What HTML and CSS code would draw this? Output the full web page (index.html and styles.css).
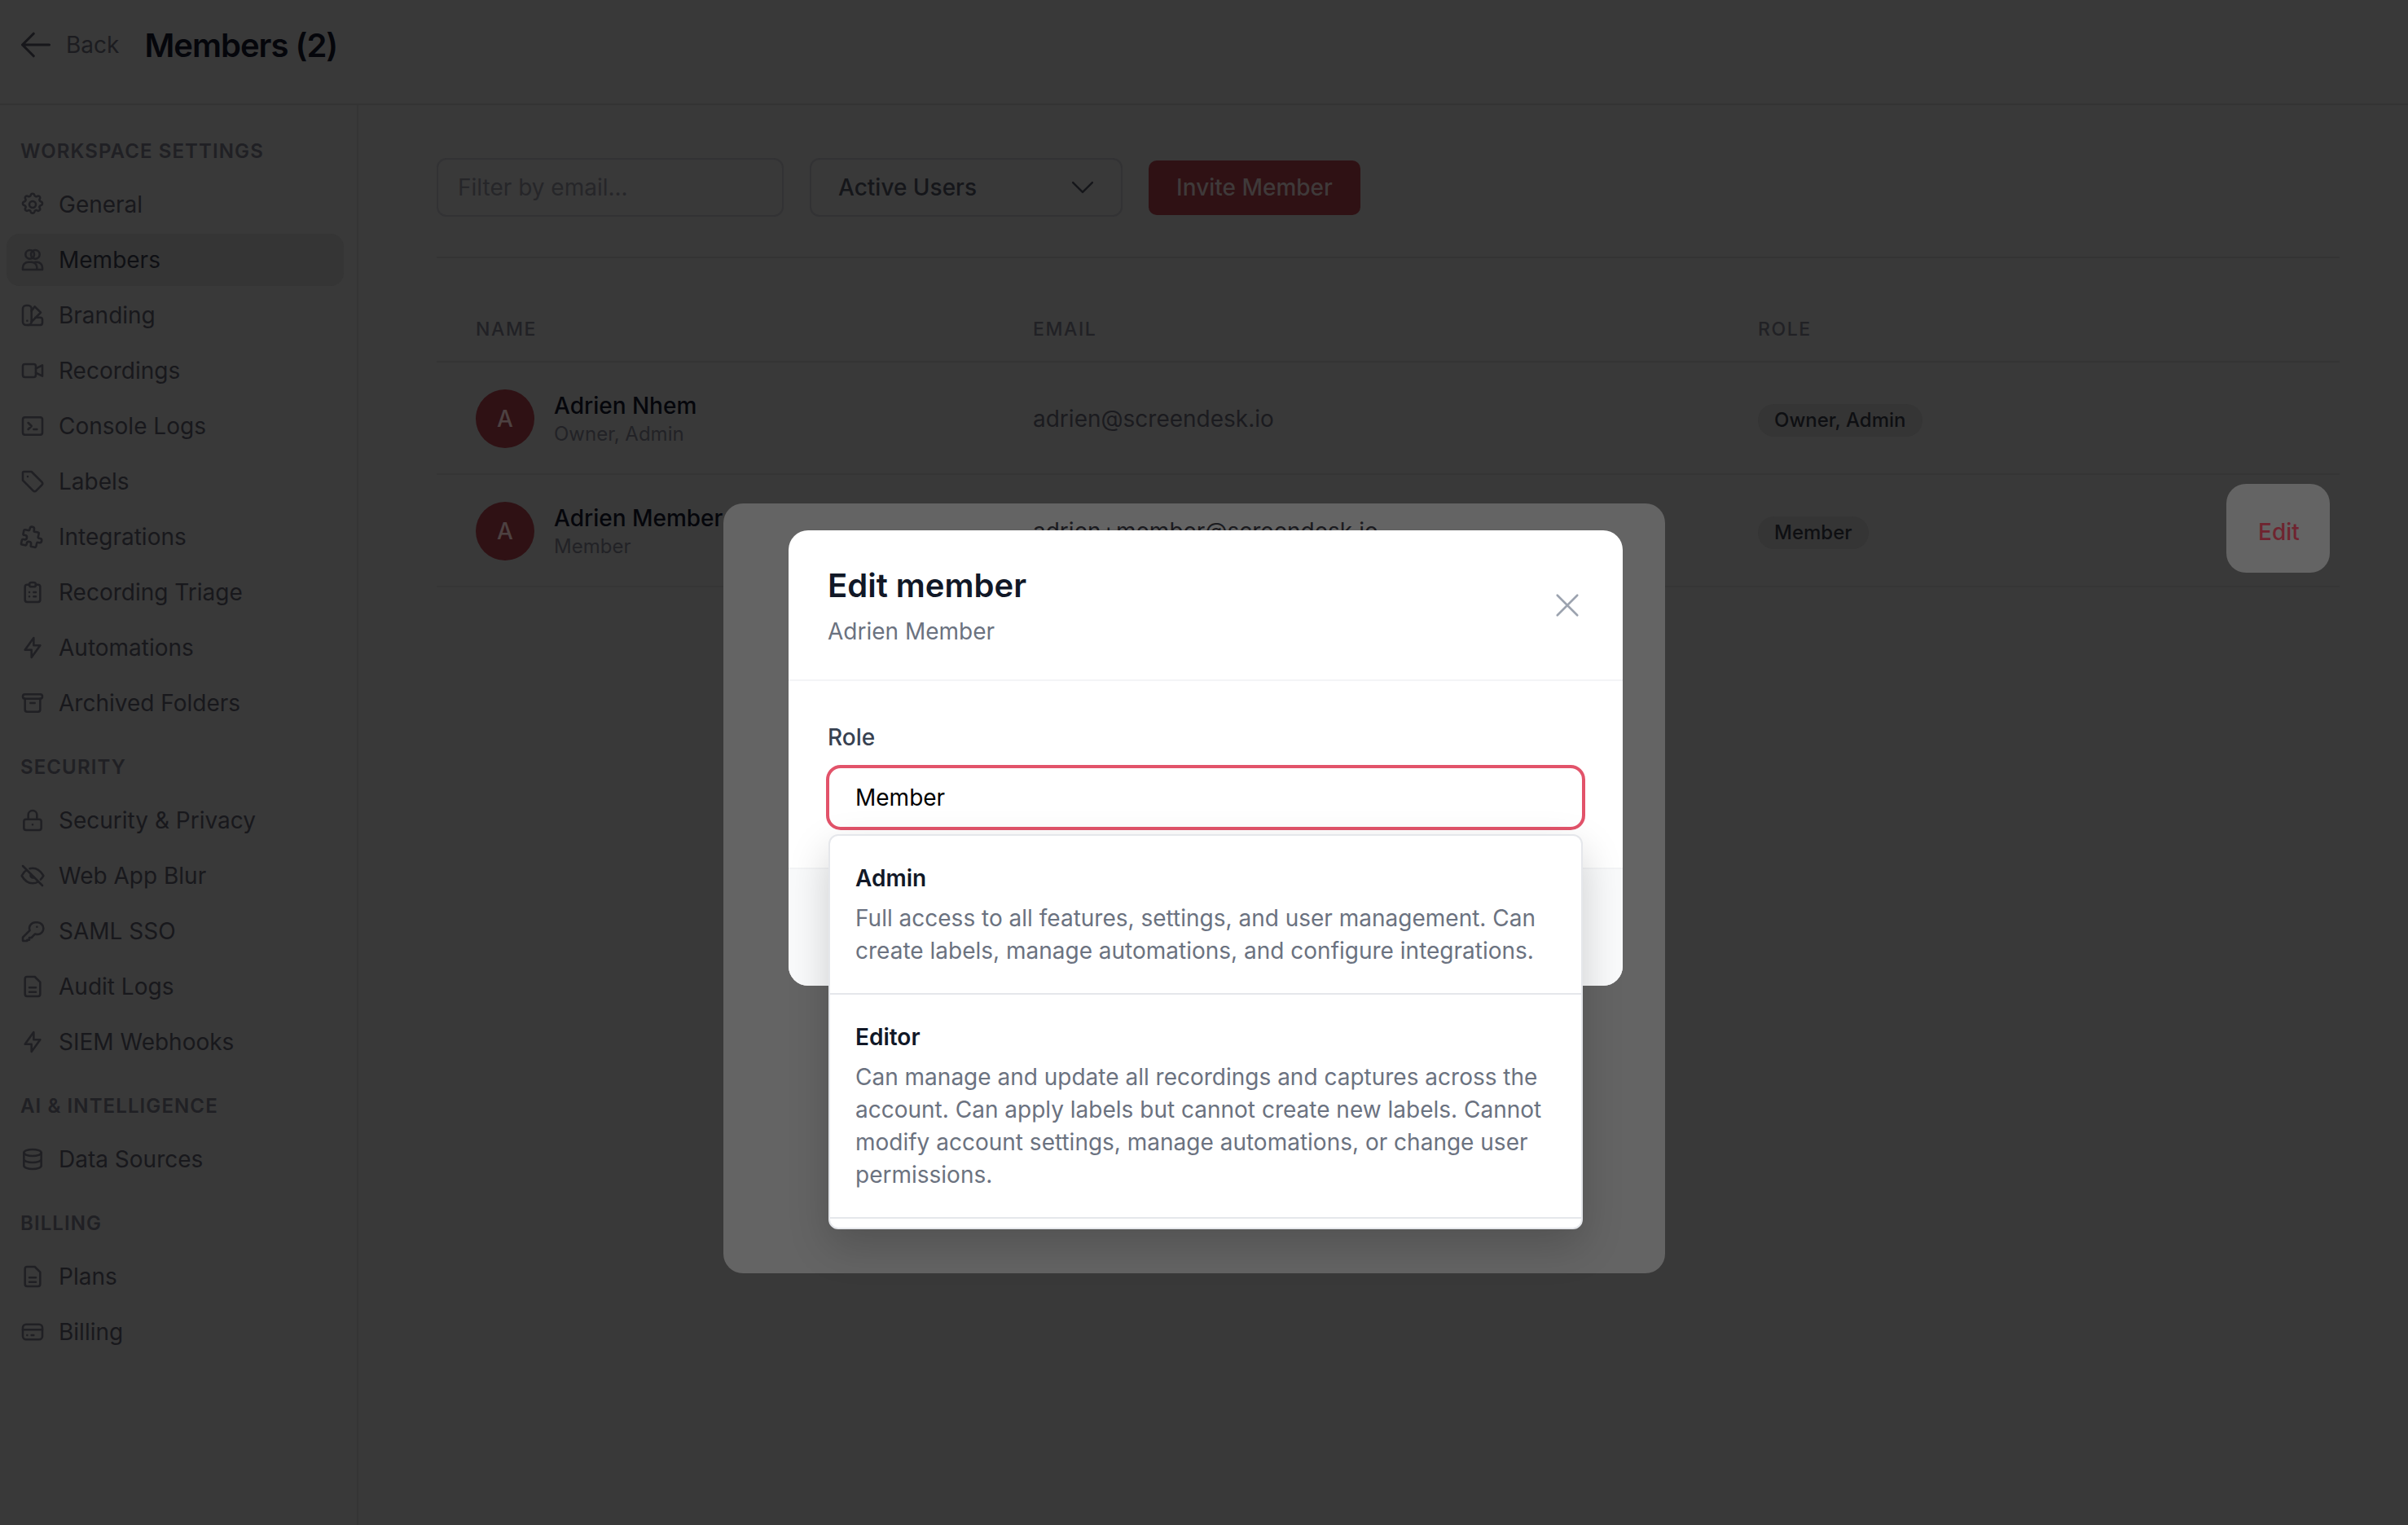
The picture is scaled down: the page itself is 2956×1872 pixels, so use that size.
FILE: index.html
```html
<!DOCTYPE html>
<html lang="en">
<head>
<meta charset="utf-8">
<title>Members</title>
<link rel="stylesheet" href="styles.css">
</head>
<body>
<svg class="defs" width="0" height="0" aria-hidden="true">
  <defs>
    <symbol id="i-gear" viewBox="0 0 24 24"><path d="M10.3 3.3c.4-1.7 3-1.700 3.400 0a1.700 1.700 0 0 0 2.600 1.100c1.500-.9 3.200.8 2.300 2.300a1.700 1.700 0 0 0 1.100 2.600c1.700.4 1.700 3 0 3.400a1.700 1.700 0 0 0-1.100 2.600c.9 1.500-.8 3.200-2.300 2.300a1.700 1.700 0 0 0-2.600 1.100c-.4 1.700-3 1.700-3.400 0a1.700 1.700 0 0 0-2.600-1.100c-1.500.9-3.200-.8-2.300-2.300a1.700 1.700 0 0 0-1.100-2.600c-1.700-.4-1.700-3 0-3.400a1.700 1.700 0 0 0 1.100-2.600c-.9-1.500.8-3.200 2.300-2.300a1.700 1.700 0 0 0 2.600-1.100z"/><circle cx="12" cy="12" r="3"/></symbol>
    <symbol id="i-users" viewBox="0 0 24 24"><circle cx="9.500" cy="7" r="4"/><circle cx="14.500" cy="7" r="4"/><path d="M3 21v-2a5 5 0 0 1 5-5h3a5 5 0 0 1 5 5v2zM14.500 14H16a5 5 0 0 1 5 5v2h-5"/></symbol>
    <symbol id="i-brand" viewBox="0 0 24 24"><rect x="3" y="3" width="8" height="18" rx="3"/><path d="M11 8l3-4 5.500 5.500-8.500 8.500M14.500 14H19a2 2 0 0 1 2 2v3a2 2 0 0 1-2 2H8"/><path d="M7 17h.01"/></symbol>
    <symbol id="i-video" viewBox="0 0 24 24"><rect x="3" y="6" width="12" height="12" rx="2"/><path d="M15 10l6-3v10l-6-3"/></symbol>
    <symbol id="i-term" viewBox="0 0 24 24"><rect x="3" y="4" width="18" height="16" rx="2"/><path d="M8 9l3 3-3 3M13 15h3"/></symbol>
    <symbol id="i-tag" viewBox="0 0 24 24"><path d="M4 3h7l9.500 9.500a2 2 0 0 1 0 2.800l-5.200 5.200a2 2 0 0 1-2.800 0L3 11V4a1 1 0 0 1 1-1z"/><path d="M7.500 7.500h.01"/></symbol>
    <symbol id="i-puzzle" viewBox="0 0 24 24"><path d="M4 7h3a1 1 0 0 0 1-1V5a2 2 0 0 1 4 0v1a1 1 0 0 0 1 1h3a1 1 0 0 1 1 1v3a1 1 0 0 0 1 1h1a2 2 0 0 1 0 4h-1a1 1 0 0 0-1 1v3a1 1 0 0 1-1 1h-3a1 1 0 0 1-1-1v-1a2 2 0 0 0-4 0v1a1 1 0 0 1-1 1H4a1 1 0 0 1-1-1v-3a1 1 0 0 1 1-1h1a2 2 0 0 0 0-4H4a1 1 0 0 1-1-1V8a1 1 0 0 1 1-1" transform="rotate(12 12 12)"/></symbol>
    <symbol id="i-clip" viewBox="0 0 24 24"><path d="M9 5H7a2 2 0 0 0-2 2v12a2 2 0 0 0 2 2h10a2 2 0 0 0 2-2V7a2 2 0 0 0-2-2h-2"/><rect x="9" y="3" width="6" height="4" rx="2"/><path d="M9 12h.01M13 12h2M9 16h.01M13 16h2"/></symbol>
    <symbol id="i-bolt" viewBox="0 0 24 24"><path d="M13 3v7h6l-8 11v-7H5z"/></symbol>
    <symbol id="i-archive" viewBox="0 0 24 24"><rect x="3" y="4" width="18" height="4" rx="2"/><path d="M5 8v10a2 2 0 0 0 2 2h10a2 2 0 0 0 2-2V8M10 12h4"/></symbol>
    <symbol id="i-lock" viewBox="0 0 24 24"><rect x="4" y="11" width="16" height="10" rx="2"/><path d="M8 11V7a4 4 0 0 1 8 0v4M12 16h.01"/></symbol>
    <symbol id="i-eyeoff" viewBox="0 0 24 24"><path d="M3 3l18 18M10.600 10.600a2 2 0 0 0 2.800 2.800M9.400 5.400A9 9 0 0 1 12 5c4 0 7.300 2.300 10 7-.8 1.400-1.700 2.600-2.600 3.500M6.600 6.600C4.900 7.700 3.400 9.500 2 12c2.700 4.700 6 7 10 7 1.900 0 3.600-.5 5.200-1.600"/></symbol>
    <symbol id="i-key" viewBox="0 0 24 24"><path d="M16.500 4a5.500 5.500 0 0 1 0 11c-.8 0-1.500-.1-2.200-.4L11 18H9v2H7v1H3.500a.5.500 0 0 1-.5-.5v-2.800l6.400-6.400c-.3-.7-.4-1.500-.4-2.300A5.500 5.500 0 0 1 14.500 4z"/><path d="M16 8h.01"/></symbol>
    <symbol id="i-file" viewBox="0 0 24 24"><path d="M14 3H7a2 2 0 0 0-2 2v14a2 2 0 0 0 2 2h10a2 2 0 0 0 2-2V8z"/><path d="M9 13h6M9 17h6"/></symbol>
    <symbol id="i-db" viewBox="0 0 24 24"><ellipse cx="12" cy="6" rx="8" ry="3"/><path d="M4 6v12c0 1.700 3.600 3 8 3s8-1.300 8-3V6M4 12c0 1.700 3.600 3 8 3s8-1.300 8-3"/></symbol>
    <symbol id="i-card" viewBox="0 0 24 24"><rect x="3" y="5" width="18" height="14" rx="3"/><path d="M3 10h18M7 15h.01M11 15h2"/></symbol>
  </defs>
</svg>

<header class="topbar">
  <a class="back">
    <svg class="back-arrow" viewBox="0 0 24 24"><path d="M10.500 19.500L3 12m0 0l7.500-7.500M3 12h18"/></svg>
    <span>Back</span>
  </a>
  <h1 class="page-title">Members (2)</h1>
</header>

<div class="shell">
  <nav class="sidebar">
    <div class="nav-label first">Workspace Settings</div>
    <a class="nav-item"><svg class="nav-icon"><use href="#i-gear"/></svg>General</a>
    <a class="nav-item active"><svg class="nav-icon"><use href="#i-users"/></svg>Members</a>
    <a class="nav-item"><svg class="nav-icon"><use href="#i-brand"/></svg>Branding</a>
    <a class="nav-item"><svg class="nav-icon"><use href="#i-video"/></svg>Recordings</a>
    <a class="nav-item"><svg class="nav-icon"><use href="#i-term"/></svg>Console Logs</a>
    <a class="nav-item"><svg class="nav-icon"><use href="#i-tag"/></svg>Labels</a>
    <a class="nav-item"><svg class="nav-icon"><use href="#i-puzzle"/></svg>Integrations</a>
    <a class="nav-item"><svg class="nav-icon"><use href="#i-clip"/></svg>Recording Triage</a>
    <a class="nav-item"><svg class="nav-icon"><use href="#i-bolt"/></svg>Automations</a>
    <a class="nav-item"><svg class="nav-icon"><use href="#i-archive"/></svg>Archived Folders</a>
    <div class="nav-label">Security</div>
    <a class="nav-item"><svg class="nav-icon"><use href="#i-lock"/></svg>Security &amp; Privacy</a>
    <a class="nav-item"><svg class="nav-icon"><use href="#i-eyeoff"/></svg>Web App Blur</a>
    <a class="nav-item"><svg class="nav-icon"><use href="#i-key"/></svg>SAML SSO</a>
    <a class="nav-item"><svg class="nav-icon"><use href="#i-file"/></svg>Audit Logs</a>
    <a class="nav-item"><svg class="nav-icon"><use href="#i-bolt"/></svg>SIEM Webhooks</a>
    <div class="nav-label">AI &amp; Intelligence</div>
    <a class="nav-item"><svg class="nav-icon"><use href="#i-db"/></svg>Data Sources</a>
    <div class="nav-label">Billing</div>
    <a class="nav-item"><svg class="nav-icon"><use href="#i-file"/></svg>Plans</a>
    <a class="nav-item"><svg class="nav-icon"><use href="#i-card"/></svg>Billing</a>
  </nav>

  <main class="content">
    <div class="toolbar">
      <div class="field filter">Filter by email...</div>
      <div class="field select">
        <span>Active Users</span>
        <svg class="chev" viewBox="0 0 24 24"><path d="M19.500 8.250l-7.500 7.500-7.500-7.500"/></svg>
      </div>
      <button class="invite">Invite Member</button>
    </div>

    <div class="table">
      <div class="row head">
        <div>Name</div>
        <div>Email</div>
        <div>Role</div>
      </div>
      <div class="row">
        <div class="person">
          <span class="avatar">A</span>
          <div class="pinfo"><div class="pname">Adrien Nhem</div><div class="psub">Owner, Admin</div></div>
        </div>
        <div class="email">adrien@screendesk.io</div>
        <div><span class="pill">Owner, Admin</span></div>
      </div>
      <div class="row">
        <div class="person">
          <span class="avatar">A</span>
          <div class="pinfo"><div class="pname">Adrien Member</div><div class="psub">Member</div></div>
        </div>
        <div class="email">adrien+member@screendesk.io</div>
        <div><span class="pill">Member</span></div>
        <button class="edit-btn">Edit</button>
      </div>
    </div>
  </main>
</div>

<div class="dialog-frame"></div>
<section class="modal">
  <div class="modal-head">
    <div>
      <h2 class="modal-title">Edit member</h2>
      <p class="modal-sub">Adrien Member</p>
    </div>
    <svg class="close" viewBox="0 0 24 24"><path d="M5 5l14 14M19 5L5 19"/></svg>
  </div>
  <div class="modal-body">
    <div class="role-label">Role</div>
    <div class="role-input">Member</div>
  </div>
  <div class="modal-foot"></div>
  <div class="dropdown">
    <div class="option">
      <div class="opt-title">Admin</div>
      <div class="opt-desc">Full access to all features, settings, and user management. Can create labels, manage automations, and configure integrations.</div>
    </div>
    <div class="option">
      <div class="opt-title">Editor</div>
      <div class="opt-desc">Can manage and update all recordings and captures across the account. Can apply labels but cannot create new labels. Cannot modify account settings, manage automations, or change user permissions.</div>
    </div>
  </div>
</section>
</body>
</html>
```
FILE: styles.css
```css
* { box-sizing: border-box; }
html, body { margin: 0; height: 100%; }
body {
  background: #393939;
  font-family: Inter, "Liberation Sans", sans-serif;
  color: #1a1a1e;
  overflow: hidden;
  position: relative;
}
.defs { position: absolute; }
svg { fill: none; stroke: currentColor; stroke-linecap: round; stroke-linejoin: round; }

.topbar {
  height: 129px;
  display: flex;
  align-items: center;
  padding: 0 0 17px 22px;
  border-bottom: 2px solid #333;
}
.back { display: flex; align-items: center; gap: 15px; font-size: 28px; color: #1c1c20; }
.back-arrow { width: 44px; height: 44px; stroke-width: 1.7; color: #17171b; }
.page-title { margin: 0 0 0 31px; font-size: 40px; font-weight: 600; color: #05060b; letter-spacing: -1px; }

.shell { display: flex; height: calc(100% - 129px); }
.sidebar {
  width: 440px;
  flex: none;
  border-right: 2px solid #343434;
  padding: 41px 16px 0 8px;
}
.nav-label {
  font-size: 24px;
  font-weight: 600;
  letter-spacing: 1.1px;
  text-transform: uppercase;
  color: #202024;
  line-height: 32px;
  padding-left: 17px;
  margin: 29px 0 15px;
}
.nav-label.first { margin-top: 0; }
.nav-item {
  height: 68px;
  display: flex;
  align-items: center;
  gap: 16px;
  padding-left: 16px;
  font-size: 28px;
  color: #18181c;
  border-radius: 16px;
}
.nav-item.active { background: #353535; color: #0f1014; height: 64px; margin: 2px 0; }
.nav-icon { width: 32px; height: 32px; stroke-width: 1.9; flex: none; color: #202024; }

.content { flex: 1; padding: 65px 84px 0 96px; min-width: 0; }
.toolbar {
  display: flex;
  align-items: center;
  gap: 32px;
  padding-bottom: 49px;
  border-bottom: 2px solid #343434;
}
.field {
  height: 72px;
  border: 2px solid #323234;
  border-radius: 12px;
  display: flex;
  align-items: center;
  font-size: 28px;
}
.filter { width: 426px; padding-left: 24px; color: #262629; }
.select { width: 384px; padding: 0 28px 0 33px; justify-content: space-between; color: #15161a; font-weight: 500; }
.chev { width: 38px; height: 38px; stroke-width: 1.5; }
.invite {
  height: 67px;
  width: 260px;
  border: 0;
  border-radius: 10px;
  background: #2f1114;
  color: #3f3a3a;
  font: 500 28px Inter, "Liberation Sans", sans-serif;
}

.table { margin-top: 48px; }
.row {
  display: grid;
  grid-template-columns: 684px 890px 1fr;
  align-items: center;
  height: 138px;
  padding-left: 48px;
  border-bottom: 2px solid #353535;
  position: relative;
}
.row.head {
  height: 80px;
  font-size: 23px;
  font-weight: 500;
  letter-spacing: 1.6px;
  text-transform: uppercase;
  color: #212125;
  border-bottom-color: #343434;
}
.person { display: flex; align-items: center; gap: 24px; margin-top: 2px; }
.pinfo { padding-top: 2px; }
.avatar {
  width: 72px;
  height: 72px;
  border-radius: 50%;
  background: #2f1114;
  color: #4d4141;
  display: flex;
  align-items: center;
  justify-content: center;
  font-size: 28px;
  font-weight: 500;
}
.pname { font-size: 28px; font-weight: 500; color: #05060b; line-height: 36px; }
.psub { font-size: 24px; color: #222226; line-height: 34px; }
.email { font-size: 28px; color: #1b1b1f; padding-top: 2px; position: relative; z-index: 1; }
.pill {
  display: inline-block;
  background: #353535;
  border-radius: 20px;
  padding: 0 20px;
  margin-top: 6px;
  font-size: 24px;
  font-weight: 500;
  line-height: 40px;
  color: #0e0f12;
}
.edit-btn {
  position: absolute;
  right: 12px;
  top: 11px;
  width: 127px;
  height: 109px;
  border: 0;
  padding: 8px 0 0 2px;
  border-radius: 24px;
  background: #646464;
  color: #6f2430;
  font: 500 28px Inter, "Liberation Sans", sans-serif;
}

.dialog-frame {
  position: absolute;
  left: 888px;
  top: 618px;
  width: 1156px;
  height: 945px;
  background: #646464;
  border-radius: 24px;
}
.modal {
  position: absolute;
  z-index: 2;
  left: 968px;
  top: 651px;
  width: 1024px;
  height: 559px;
  background: #fff;
  border-radius: 24px;
  color: #111827;
}
.modal-head {
  height: 185px;
  padding: 44px 48px 0;
  display: flex;
  justify-content: space-between;
  border-bottom: 2px solid #f3f4f6;
}
.modal-title { margin: 0; font-size: 40px; font-weight: 600; line-height: 48px; color: #111827; }
.modal-sub { margin: 12px 0 0; font-size: 28px; line-height: 40px; color: #6b7280; }
.close { width: 42px; height: 42px; margin: 27px -1px 0 0; color: #9ca3af; stroke-width: 1.5; }
.modal-body { padding: 49px 46px 0; height: 229px; }
.role-label { font-size: 28px; font-weight: 500; line-height: 40px; padding-left: 2px; color: #374151; margin-bottom: 14px; }
.role-input {
  height: 80px;
  border: 4px solid #e2536a;
  border-radius: 18px;
  display: flex;
  align-items: center;
  padding-left: 32px;
  font-size: 28px;
  font-weight: 400;
  color: #000;
}
.modal-foot {
  height: 145px;
  background: #f9fafb;
  border-top: 2px solid #f3f4f6;
  border-radius: 0 0 24px 24px;
}
.dropdown {
  position: absolute;
  left: 49px;
  top: 373px;
  width: 926px;
  height: 485px;
  background: #fff;
  border: 2px solid #e5e7eb;
  border-radius: 12px;
  overflow: hidden;
  box-shadow: 0 20px 50px rgba(0, 0, 0, .18);
}
.option { padding: 28px 32px 32px 31px; border-bottom: 2px solid #e5e7eb; }
.opt-title { font-size: 28px; font-weight: 600; line-height: 48px; color: #111827; }
.opt-desc { font-size: 28px; line-height: 40px; color: #6b7280; margin-top: 5px; }
```
